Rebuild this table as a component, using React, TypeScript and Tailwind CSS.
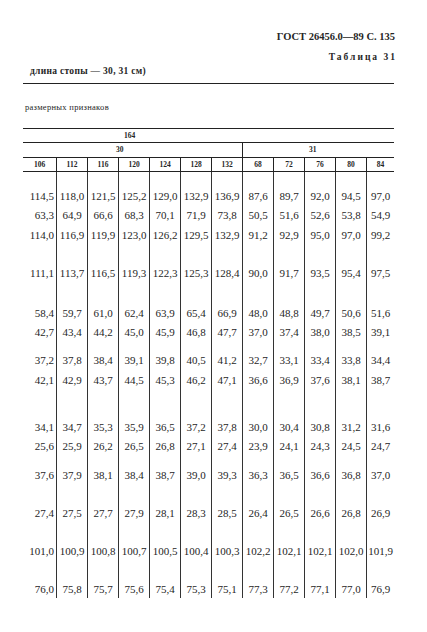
const COLS = ["106", "112", "116", "120", "124", "128", "132", "68", "72", "76", "80", "84"];

const ROWS: { h: string; pt?: string; v: string[] }[] = [
  { h: "h-[36px]", pt: "pt-[17px]", v: ["114,5", "118,0", "121,5", "125,2", "129,0", "132,9", "136,9", "87,6", "89,7", "92,0", "94,5", "97,0"] },
  { h: "h-[20px]", v: ["63,3", "64,9", "66,6", "68,3", "70,1", "71,9", "73,8", "50,5", "51,6", "52,6", "53,8", "54,9"] },
  { h: "h-[38px]", v: ["114,0", "116,9", "119,9", "123,0", "126,2", "129,5", "132,9", "91,2", "92,9", "95,0", "97,0", "99,2"] },
  { h: "h-[40px]", v: ["111,1", "113,7", "116,5", "119,3", "122,3", "125,3", "128,4", "90,0", "91,7", "93,5", "95,4", "97,5"] },
  { h: "h-[19px]", v: ["58,4", "59,7", "61,0", "62,4", "63,9", "65,4", "66,9", "48,0", "48,8", "49,7", "50,6", "51,6"] },
  { h: "h-[28px]", v: ["42,7", "43,4", "44,2", "45,0", "45,9", "46,8", "47,7", "37,0", "37,4", "38,0", "38,5", "39,1"] },
  { h: "h-[20px]", v: ["37,2", "37,8", "38,4", "39,1", "39,8", "40,5", "41,2", "32,7", "33,1", "33,4", "33,8", "34,4"] },
  { h: "h-[47px]", v: ["42,1", "42,9", "43,7", "44,5", "45,3", "46,2", "47,1", "36,6", "36,9", "37,6", "38,1", "38,7"] },
  { h: "h-[19px]", v: ["34,1", "34,7", "35,3", "35,9", "36,5", "37,2", "37,8", "30,0", "30,4", "30,8", "31,2", "31,6"] },
  { h: "h-[29px]", v: ["25,6", "25,9", "26,2", "26,5", "26,8", "27,1", "27,4", "23,9", "24,1", "24,3", "24,5", "24,7"] },
  { h: "h-[38px]", v: ["37,6", "37,9", "38,1", "38,4", "38,7", "39,0", "39,3", "36,3", "36,5", "36,6", "36,8", "37,0"] },
  { h: "h-[38px]", v: ["27,4", "27,5", "27,7", "27,9", "28,1", "28,3", "28,5", "26,4", "26,5", "26,6", "26,8", "26,9"] },
  { h: "h-[38px]", v: ["101,0", "100,9", "100,8", "100,7", "100,5", "100,4", "100,3", "102,2", "102,1", "102,1", "102,0", "101,9"] },
  { h: "h-[16px]", v: ["76,0", "75,8", "75,7", "75,6", "75,4", "75,3", "75,1", "77,3", "77,2", "77,1", "77,0", "76,9"] },
];

export default function App() {
  return (
    <div
      className="w-[427px] h-[632px] bg-white text-[#262626] overflow-hidden"
      style={{ fontFamily: '"Liberation Serif", "DejaVu Serif", serif' }}
    >
      {/* page header */}
      <div className="pt-[30px] pr-[32px] text-right">
        <p className="text-[10.5px] leading-[14px] font-bold">ГОСТ 26456.0—89 С. 135</p>
        <p className="mt-[7px] text-[9.5px] leading-[13px] font-bold tracking-[2px] -mr-[2px]">Таблица 31</p>
      </div>
      <p className="ml-[30px] text-[9.5px] leading-[14px] font-bold tracking-[0.3px]">длина стопы — 30, 31 см)</p>
      <div className="ml-[23px] mt-[5px] w-[371px] border-t-[1.5px] border-[#222]" />
      <p className="ml-[25px] mt-[17px] text-[8.5px] leading-[12px] tracking-[0.3px]">размерных признаков</p>

      {/* table */}
      <div className="ml-[23px] mt-[15px] w-[371px] grid grid-cols-[33px_31px_31px_31px_31px_31px_31px_31px_31px_31px_31px_28px] border-t border-[#222]">
        <div className="col-span-12 h-[14px] border-b border-[#222] pl-[101px] text-[7.5px] leading-[13px] font-bold">164</div>
        <div className="col-span-7 h-[15px] border-b border-[#222] pl-[93px] text-[7.5px] leading-[14px] font-bold">30</div>
        <div className="col-span-5 h-[15px] border-b border-l border-[#222] pl-[66px] text-[7.5px] leading-[14px] font-bold">31</div>
        {COLS.map((c, i) => (
          <div
            key={c}
            className={`h-[14px] border-b border-[#222] text-center text-[7.5px] leading-[13px] font-bold ${i > 0 ? "border-l" : ""}`}
          >
            {c}
          </div>
        ))}
        {ROWS.map((r, ri) =>
          r.v.map((v, i) => (
            <div
              key={`${ri}-${i}`}
              className={`${r.h} ${r.pt ?? ""} text-[11px] leading-[14px] whitespace-nowrap ${
                i === 0 ? "text-right pr-[2px]" : "text-center border-l border-[#333]"
              }`}
            >
              {v}
            </div>
          ))
        )}
      </div>
    </div>
  );
}
